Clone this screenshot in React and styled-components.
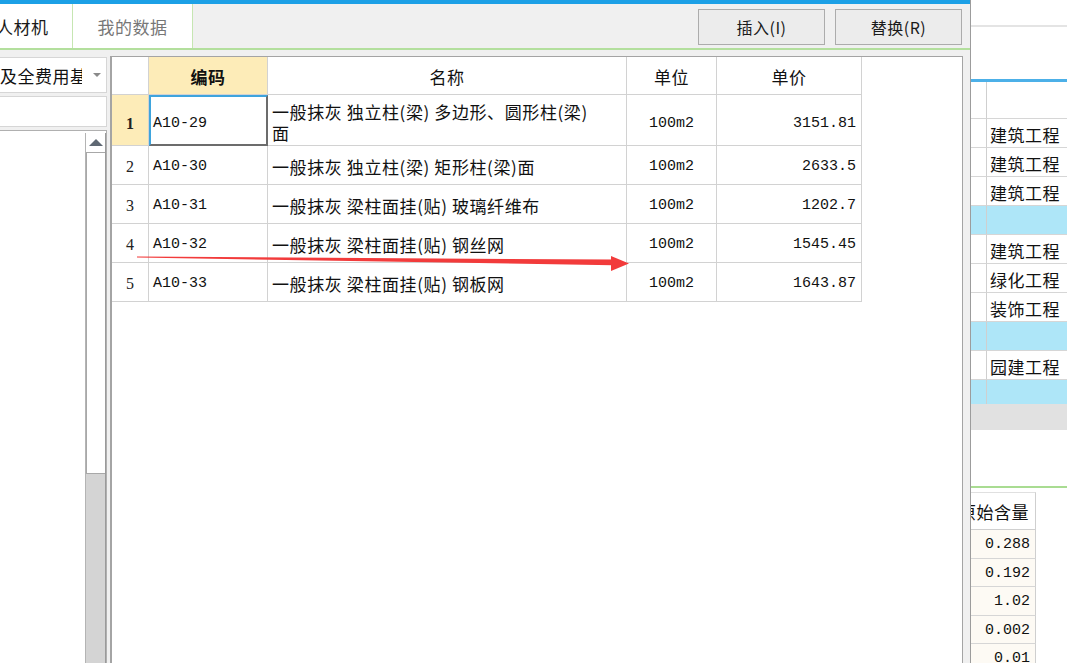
import React from "react";
import styled, { createGlobalStyle } from "styled-components";

const GlobalStyle = createGlobalStyle`
  html, body {
    margin: 0;
    padding: 0;
    background: #fff;
    overflow: hidden;
  }
  body {
    font-family: "Noto Sans CJK SC", "Noto Sans", sans-serif;
    color: #111;
  }
`;

const rows = [
  {
    no: 1,
    code: "A10-29",
    name: ["一般抹灰 独立柱(梁) 多边形、圆形柱(梁)", "面"],
    unit: "100m2",
    price: "3151.81",
    active: true,
  },
  { no: 2, code: "A10-30", name: ["一般抹灰 独立柱(梁) 矩形柱(梁)面"], unit: "100m2", price: "2633.5" },
  { no: 3, code: "A10-31", name: ["一般抹灰 梁柱面挂(贴) 玻璃纤维布"], unit: "100m2", price: "1202.7" },
  { no: 4, code: "A10-32", name: ["一般抹灰 梁柱面挂(贴) 钢丝网"], unit: "100m2", price: "1545.45" },
  { no: 5, code: "A10-33", name: ["一般抹灰 梁柱面挂(贴) 钢板网"], unit: "100m2", price: "1643.87" },
];

// background app rows on the right edge
const sideRows = [
  { text: "建筑工程" },
  { text: "建筑工程" },
  { text: "建筑工程" },
  { blue: true },
  { text: "建筑工程" },
  { text: "绿化工程" },
  { text: "装饰工程" },
  { blue: true },
  { text: "园建工程" },
  { blue: true, short: true },
];

const amounts = ["0.288", "0.192", "1.02", "0.002", "0.01"];

const App = () => {
  return (
    <>
      <GlobalStyle />
      <Page>
        <Dialog>
          <TopStrip />
          <TabBar>
            <Tab $first>
              <TabLabel $first>人材机</TabLabel>
            </Tab>
            <Tab>
              <TabLabel $muted>我的数据</TabLabel>
            </Tab>
            <ButtonGroup>
              <ActionButton>插入(I)</ActionButton>
              <ActionButton>替换(R)</ActionButton>
            </ButtonGroup>
          </TabBar>

          <Body>
            <LeftPanel>
              <Combo>
                <ComboText>及全费用基价表</ComboText>
                <ComboArrow />
              </Combo>
              <SearchBox />
              <TreeBox>
                <ScrollBar>
                  <ScrollButton>
                    <UpArrow />
                  </ScrollButton>
                  <ScrollThumb />
                </ScrollBar>
              </TreeBox>
            </LeftPanel>

            <TablePane>
              <Grid>
                <HeadCell />
                <HeadCell $highlight $bold>编码</HeadCell>
                <HeadCell>名称</HeadCell>
                <HeadCell>单位</HeadCell>
                <HeadCell>单价</HeadCell>

                {rows.map((row) => (
                  <React.Fragment key={row.code}>
                    <NumCell $active={row.active} $tall={row.active}>
                      {row.no}
                    </NumCell>
                    <CodeCell $active={row.active} $tall={row.active}>
                      {row.code}
                    </CodeCell>
                    <NameCell $tall={row.active}>
                      {row.name.map((line, i) => (
                        <div key={i}>{line}</div>
                      ))}
                    </NameCell>
                    <UnitCell $tall={row.active}>{row.unit}</UnitCell>
                    <PriceCell $tall={row.active}>{row.price}</PriceCell>
                  </React.Fragment>
                ))}
              </Grid>
            </TablePane>
          </Body>
        </Dialog>

        <SideApp>
          <SideTopRule />
          <SideBlueRule />
          <SideTable>
            <SideMark $head />
            <SideText $head />
            {sideRows.map((r, i) => (
              <React.Fragment key={i}>
                <SideMark $blue={r.blue} $short={r.short} />
                <SideText $blue={r.blue} $short={r.short}>
                  {r.text}
                </SideText>
              </React.Fragment>
            ))}
          </SideTable>
          <SideGrayBar />
          <SideGap />
          <AmountTable>
            <AmountHead>
              <span>原始含量</span>
            </AmountHead>
            {amounts.map((a) => (
              <AmountCell key={a}>{a}</AmountCell>
            ))}
          </AmountTable>
        </SideApp>

        <ArrowLayer width="1067" height="663" viewBox="0 0 1067 663">
          <polygon points="137,256.4 613,259.6 613,265.2 137,257.6" fill="#f23b3b" />
          <polygon points="611,256 629,263.5 611,271" fill="#f23b3b" />
        </ArrowLayer>
      </Page>
    </>
  );
};

// Layout
const Page = styled.div`
  position: relative;
  display: flex;
  width: 1067px;
  height: 663px;
  overflow: hidden;
`;

const Dialog = styled.div`
  width: 971px;
  flex-shrink: 0;
  display: flex;
  flex-direction: column;
  background: #f0f0f0;
  border-right: 1px solid #9c9c9c;
  box-sizing: border-box;
`;

const TopStrip = styled.div`
  height: 4px;
  flex-shrink: 0;
  background: #1ca0e6;
`;

const TabBar = styled.div`
  height: 46px;
  flex-shrink: 0;
  display: flex;
  border-bottom: 2px solid #b3df9d;
  box-sizing: border-box;
`;

const Tab = styled.div`
  width: ${(p) => (p.$first ? "72px" : "119px")};
  background: #fff;
  border-right: 1px solid #c6e6b2;
  display: flex;
  align-items: center;
  justify-content: ${(p) => (p.$first ? "flex-start" : "center")};
  overflow: hidden;
`;

const TabLabel = styled.span`
  font-size: 17px;
  color: ${(p) => (p.$muted ? "#777" : "#1a1a1a")};
  margin-left: ${(p) => (p.$first ? "-4px" : "0")};
  letter-spacing: 0.5px;
  white-space: nowrap;
`;

const ButtonGroup = styled.div`
  margin-left: auto;
  display: flex;
  gap: 10px;
  padding: 5px 8px 0 0;
  align-items: flex-start;
`;

const ActionButton = styled.button`
  width: 127px;
  height: 36px;
  background: #ececec;
  border: 1px solid #acacac;
  border-radius: 0;
  font-family: "Noto Sans CJK SC", sans-serif;
  font-size: 16px;
  letter-spacing: 0.5px;
  color: #1a1a1a;
  padding: 0;
`;

const Body = styled.div`
  flex: 1;
  display: flex;
  gap: 3px;
  padding: 6px 7px 0 0;
  min-height: 0;
`;

// Left panel
const LeftPanel = styled.div`
  width: 107px;
  display: flex;
  flex-direction: column;
  gap: 3px;
  padding-top: 1px;
`;

const Combo = styled.div`
  height: 36px;
  flex-shrink: 0;
  background: #fff;
  border: 1px solid #d6d6d6;
  border-left: none;
  box-sizing: border-box;
  display: flex;
  align-items: center;
  padding-right: 5px;
`;

const ComboText = styled.span`
  width: 82px;
  overflow: hidden;
  white-space: nowrap;
  font-size: 17px;
  letter-spacing: 0.5px;
  color: #111;
`;

const ComboArrow = styled.span`
  margin-left: auto;
  width: 0;
  height: 0;
  border-left: 4px solid transparent;
  border-right: 4px solid transparent;
  border-top: 4px solid #8a8a8a;
`;

const SearchBox = styled.div`
  height: 31px;
  flex-shrink: 0;
  background: #fff;
  border: 1px solid #d6d6d6;
  border-left: none;
  box-sizing: border-box;
`;

const TreeBox = styled.div`
  flex: 1;
  background: #fff;
  border: 1px solid #b0b0b0;
  border-left: none;
  border-bottom: none;
  display: flex;
  justify-content: flex-end;
  padding: 2px 0 0;
`;

const ScrollBar = styled.div`
  width: 21px;
  display: flex;
  flex-direction: column;
  background: #d4d4d4;
  border-left: 1px solid #b4b4b4;
  border-right: 1px solid #9a9a9a;
  box-sizing: border-box;
`;

const ScrollButton = styled.div`
  height: 19px;
  flex-shrink: 0;
  background: #fff;
  display: flex;
  align-items: center;
  justify-content: center;
`;

const UpArrow = styled.span`
  width: 0;
  height: 0;
  border-left: 7px solid transparent;
  border-right: 7px solid transparent;
  border-bottom: 7px solid #5f6873;
`;

const ScrollThumb = styled.div`
  height: 322px;
  flex-shrink: 0;
  background: #fff;
  border: 1px solid #a8a8a8;
  border-right: none;
  box-sizing: border-box;
`;

// Main table
const TablePane = styled.div`
  flex: 1;
  background: #fff;
  border: 1px solid #a4a4a4;
  border-left: 2px solid #a4a4a4;
  border-bottom: none;
  box-sizing: border-box;
`;

const Grid = styled.div`
  display: grid;
  grid-template-columns: 37px 119px 359px 90px 145px;
  grid-auto-rows: 39px;
  grid-template-rows: 38px 51px;
  width: max-content;
`;

const cellBase = `
  box-sizing: border-box;
  border-right: 1px solid #d2d2d2;
  border-bottom: 1px solid #d2d2d2;
  display: flex;
  align-items: center;
  overflow: hidden;
  white-space: nowrap;
`;

const rowPad = (p) => (p.$tall ? "7px" : "3px");

const HeadCell = styled.div`
  ${cellBase}
  justify-content: center;
  padding-top: 1px;
  font-size: 17px;
  letter-spacing: 0.5px;
  font-weight: ${(p) => (p.$bold ? 700 : 400)};
  background: ${(p) => (p.$highlight ? "#fdecb8" : "#fff")};
  color: #111;
`;

const NumCell = styled.div`
  ${cellBase}
  justify-content: center;
  padding-top: ${rowPad};
  font-family: "Liberation Serif", serif;
  font-size: 16px;
  font-weight: ${(p) => (p.$active ? 700 : 400)};
  background: ${(p) => (p.$active ? "#fdecb8" : "#fff")};
  color: #222;
`;

const CodeCell = styled.div`
  ${cellBase}
  padding-left: 4px;
  padding-top: ${rowPad};
  font-family: "Liberation Mono", monospace;
  font-size: 15px;
  color: #111;
  ${(p) =>
    p.$active &&
    `
    border: 2px solid;
    border-color: #3ea4dd #6c6c6c #6c6c6c #3ea4dd;
    padding-left: 2px;
    padding-top: 6px;
  `}
`;

const NameCell = styled.div`
  ${cellBase}
  flex-direction: column;
  align-items: flex-start;
  justify-content: center;
  padding-left: 4px;
  padding-top: ${(p) => (p.$tall ? "4px" : "3px")};
  font-size: 17px;
  letter-spacing: 0.6px;
  line-height: 21px;
  color: #111;
`;

const UnitCell = styled.div`
  ${cellBase}
  justify-content: center;
  padding-top: ${rowPad};
  font-family: "Liberation Mono", monospace;
  font-size: 15px;
  color: #111;
`;

const PriceCell = styled.div`
  ${cellBase}
  justify-content: flex-end;
  padding-right: 5px;
  padding-top: ${rowPad};
  font-family: "Liberation Mono", monospace;
  font-size: 15px;
  color: #111;
`;

// Background application on the right
const SideApp = styled.div`
  flex: 1;
  display: flex;
  flex-direction: column;
  background: #fff;
  overflow: hidden;

  & > * {
    flex-shrink: 0;
  }
`;

const SideTopRule = styled.div`
  height: 27px;
  border-bottom: 2px solid #e4e4e4;
  box-sizing: border-box;
  margin-bottom: 52px;
`;

const SideBlueRule = styled.div`
  height: 3px;
  background: #4cb0e8;
`;

const SideTable = styled.div`
  display: grid;
  grid-template-columns: 16px 1fr;
`;

const sideRowHeight = (p) => (p.$head ? "37px" : p.$short ? "24px" : "29px");

const SideMark = styled.div`
  height: ${sideRowHeight};
  box-sizing: border-box;
  border-right: 1px solid #cfcfcf;
  border-bottom: ${(p) => (p.$short ? "none" : "1px solid #d6d6d6")};
  background: ${(p) => (p.$blue ? "#aee6f8" : "#fff")};
`;

const SideText = styled.div`
  height: ${sideRowHeight};
  box-sizing: border-box;
  border-bottom: ${(p) => (p.$short ? "none" : "1px solid #d6d6d6")};
  background: ${(p) => (p.$blue ? "#aee6f8" : "#fff")};
  padding: 2px 0 0 3px;
  display: flex;
  align-items: center;
  font-size: 17px;
  letter-spacing: 0.5px;
  white-space: nowrap;
  overflow: hidden;
  color: #111;
`;

const SideGrayBar = styled.div`
  height: 26px;
  background: #e1e1e1;
`;

const SideGap = styled.div`
  height: 58px;
  border-bottom: 2px solid #a9dc92;
  box-sizing: border-box;
`;

const AmountTable = styled.div`
  width: 65px;
  display: flex;
  flex-direction: column;
  padding-top: 4px;

  & > * {
    flex-shrink: 0;
  }
`;

const AmountHead = styled.div`
  height: 38px;
  box-sizing: border-box;
  border-right: 1px solid #cfcfcf;
  border-bottom: 1px solid #cfcfcf;
  border-top: 1px solid #e0e0e0;
  display: flex;
  align-items: center;
  justify-content: flex-end;
  padding: 1px 6px 0 0;
  overflow: hidden;
  white-space: nowrap;
  font-size: 17px;
  letter-spacing: 0.5px;
  color: #111;
`;

const AmountCell = styled.div`
  height: 28.5px;
  box-sizing: border-box;
  border-right: 1px solid #cfcfcf;
  border-bottom: 1px solid #d6d6d6;
  background: #fdfaf4;
  display: flex;
  align-items: center;
  justify-content: flex-end;
  padding: 2px 5px 0 0;
  font-family: "Liberation Mono", monospace;
  font-size: 15px;
  color: #111;
`;

const ArrowLayer = styled.svg`
  position: absolute;
  left: 0;
  top: 0;
  pointer-events: none;
`;

export default App;
